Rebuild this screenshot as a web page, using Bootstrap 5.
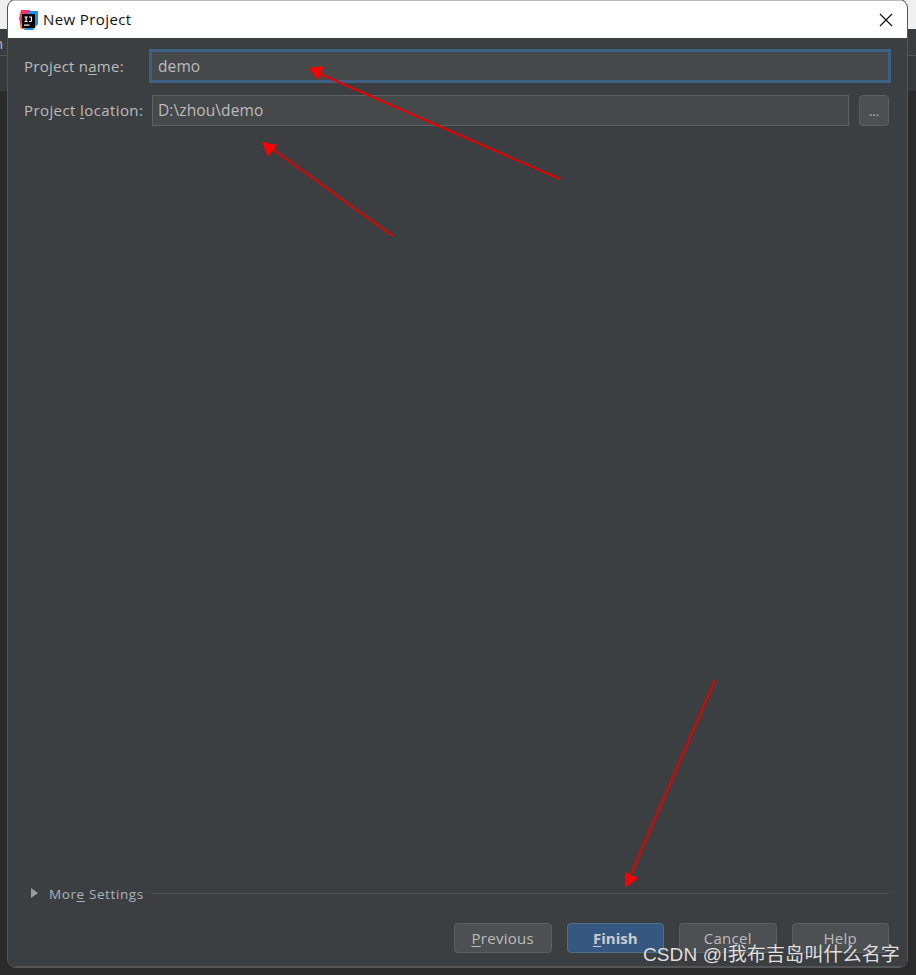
<!DOCTYPE html>
<html lang="en">
<head>
<meta charset="utf-8">
<title>New Project</title>
<link rel="stylesheet" href="https://cdn.jsdelivr.net/npm/bootstrap@5.3.0/dist/css/bootstrap.min.css">
<style>
html,body{height:100%;}
body{background:#2b2b2b;position:relative;overflow:hidden;font-family:"Open Sans","Noto Sans",sans-serif;}
.bg-strip-top{position:absolute;left:0;right:0;top:0;height:29px;background:#f0f0f0;}
.bg-strip-panel{position:absolute;left:0;right:0;top:29px;height:62px;background:linear-gradient(#3a3d3f 0 26px,#555 26px 27px,#36393b 27px);overflow:hidden;}
.bg-letter{position:absolute;left:-6px;top:4px;font-size:15px;line-height:20px;color:#bbb;}
.ij-window{position:absolute;left:8px;top:0;width:899px;height:967px;border-radius:8px;overflow:hidden;background:#3c3f41;box-shadow:0 0 0 1px #555;}
.ij-title{height:38px;background:#fff;border-top:1px solid #bbb;padding-left:11px;padding-right:14px;font-size:15px;letter-spacing:.4px;color:#111;}
.ij-logo{margin-right:5px;}
.ij-body{height:929px;background:#3c3f41;color:#bbb;font-size:15px;padding:12px 17px 13px 16px;border-bottom:1px solid #555;}
.ij-label{color:#bbb;white-space:nowrap;letter-spacing:.4px;}
.ij-w1{width:126px;letter-spacing:.25px;}
.ij-w2{width:128px;}
.ij-input{background:#45494a;color:#bbb;height:31px;line-height:29px;padding:0 5px;font-size:15.5px;letter-spacing:.1px;border:1px solid #5f6262;}
.ij-focus{background:#45494a;color:#bbb;height:32px;line-height:28px;padding:0 6px;font-size:15.5px;letter-spacing:.1px;border:2px solid #3d6185;box-shadow:0 0 0 1px #3d6185;}
.ij-row2{margin-top:13px;}
.ij-browse{width:30px;height:31px;margin-left:10px;margin-right:1px;background:#4c5052;border:1px solid #5e6060;border-radius:4px;color:#bbb;font-size:13px;line-height:26px;text-align:center;padding:0;}
.ij-more{margin-top:auto;color:#a9b2ba;font-size:13.5px;letter-spacing:.6px;padding-left:7px;}
.ij-tri{width:0;height:0;border-left:7px solid #9a9da0;border-top:5.500px solid transparent;border-bottom:5.500px solid transparent;margin-right:11px;margin-top:-2px;}
.ij-rule{height:1px;background:#515556;margin-left:7px;margin-right:1px;margin-top:-1px;}
.ij-foot{margin-top:19px;margin-right:1px;gap:15px;}
.ij-btn{width:97.500px;height:30px;padding:0;font-size:15px;letter-spacing:.3px;line-height:28px;background:#4c5052;border:1px solid #5e6060;border-radius:4px;color:#bbb;text-align:center;font-family:inherit;}
.ij-primary{background:#365880;border-color:#4c708c;font-weight:700;letter-spacing:0;color:#c8ccd0;}
.ij-arrows{position:absolute;left:0;top:0;width:916px;height:975px;pointer-events:none;}
.ij-mark{position:absolute;right:16px;top:943px;color:#e0e0e0;font-size:19px;letter-spacing:.15px;line-height:24px;white-space:nowrap;font-family:"Liberation Sans","Noto Sans CJK SC",sans-serif;text-shadow:0 0 1px #333;}
u{text-underline-offset:2px;}
</style>
</head>
<body>
<div class="bg-strip-top"></div>
<div class="bg-strip-panel"><span class="bg-letter">n</span></div>
<div class="ij-window d-flex flex-column">
  <div class="ij-title d-flex align-items-center justify-content-between">
    <div class="d-flex align-items-center">
      <svg class="ij-logo" width="19" height="20" viewBox="0 0 19 20" aria-hidden="true">
        <path d="M2 0h9l-2 8-9 1z" fill="#f0346e"/>
        <path d="M10 1h9v13l-5 6H5z" fill="#1d8ff0"/>
        <path d="M0 8l7-1-1 11-4 1z" fill="#f0346e"/>
        <path d="M1 14l6-2v7H2z" fill="#fc801d"/>
        <rect x="3" y="4" width="13" height="14" fill="#000"/>
        <rect x="5" y="14.500" width="5.500" height="1.200" fill="#fff"/>
        <path d="M5.500 6.500h3.200v1h-1v3.500h1v1H5.500v-1h1V7.500h-1zM10 6.500h3v4.100c0 1-.7 1.500-1.600 1.500-.6 0-1.100-.2-1.500-.6l.6-.7c.2.200.5.300.8.300.3 0 .6-.2.600-.6V7.500H10z" fill="#fff"/>
      </svg>
      <span>New Project</span>
    </div>
    <svg width="14" height="14" viewBox="0 0 14 14" aria-hidden="true"><path d="M1 1l12 12M13 1L1 13" stroke="#111" stroke-width="1.200" fill="none"/></svg>
  </div>
  <div class="ij-body d-flex flex-column flex-grow-1">
    <div class="d-flex align-items-center">
      <div class="ij-label ij-w1">Project n<u>a</u>me:</div>
      <div class="ij-focus flex-grow-1">demo</div>
    </div>
    <div class="d-flex align-items-center ij-row2">
      <div class="ij-label ij-w2">Project <u>l</u>ocation:</div>
      <div class="ij-input flex-grow-1">D:\zhou\demo</div>
      <button type="button" class="ij-browse">...</button>
    </div>
    <div class="ij-more d-flex align-items-center">
      <span class="ij-tri"></span><span>Mor<u>e</u> Settings</span>
      <div class="ij-rule flex-grow-1"></div>
    </div>
    <div class="ij-foot d-flex justify-content-end">
      <button type="button" class="ij-btn"><u>P</u>revious</button>
      <button type="button" class="ij-btn ij-primary"><u>F</u>inish</button>
      <button type="button" class="ij-btn">Cancel</button>
      <button type="button" class="ij-btn">Help</button>
    </div>
  </div>
</div>
<svg class="ij-arrows" viewBox="0 0 916 975" aria-hidden="true">
  <g stroke="#e60000" stroke-width="2" fill="none">
    <path d="M560 179L318 73"/><path d="M393 236L271 148"/><path d="M715 680L631 874"/>
  </g>
  <g fill="#ff0000">
    <path d="M309 68L324 66L318 80z"/><path d="M262 142L277 145L268 157z"/><path d="M625 888L625 872L638 878z"/>
  </g>
</svg>
<div class="ij-mark">CSDN @I我布吉岛叫什么名字</div>
<script src="https://cdn.jsdelivr.net/npm/bootstrap@5.3.0/dist/js/bootstrap.bundle.min.js"></script>
</body>
</html>
